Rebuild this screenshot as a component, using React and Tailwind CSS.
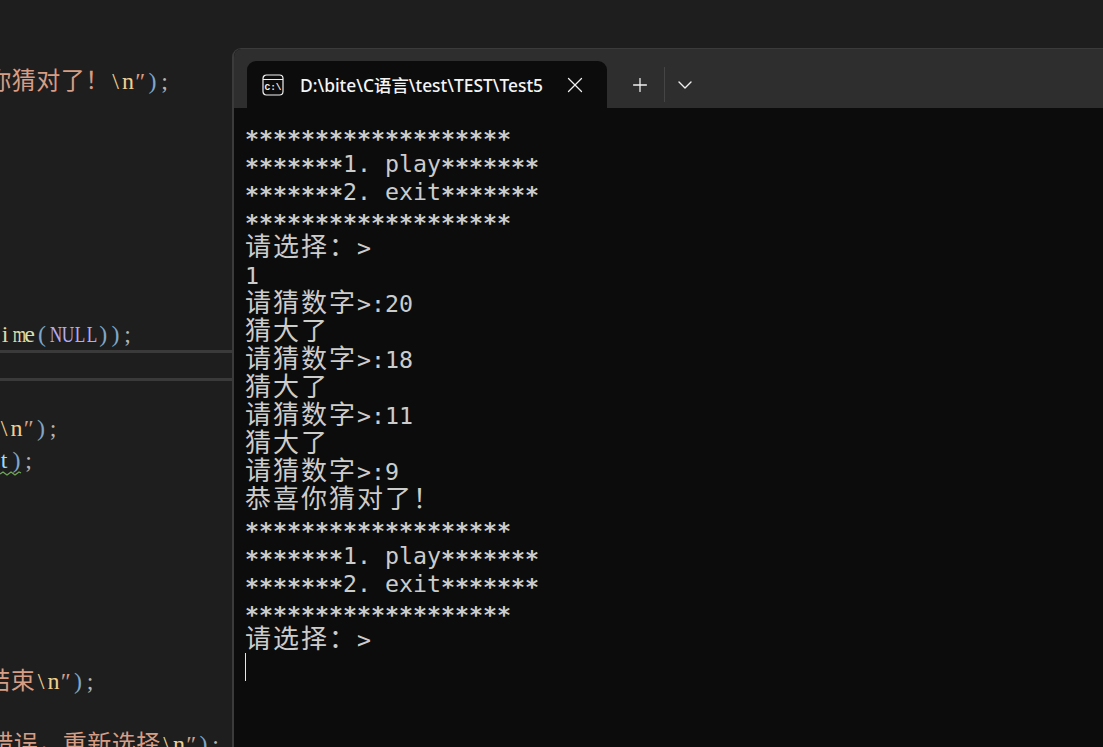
import { X, Plus, ChevronDown } from 'lucide-react';

const STR = 'text-[#d69d85]';
const ESC = 'text-[#f2cf8e]';
const PAREN = 'text-[#7fa6c9]';
const SEMI = 'text-[#b4b4b4]';

// x offset of each row is how far the text is cut by the left edge of the picture
const topRows = [
  { shift: 'ml-[-13px]', parts: [['你猜对了！', STR], ['\\n', ESC], ['″', STR], [')', PAREN], [';', SEMI]] },
  null, null, null, null, null, null, null,
  { shift: 'ml-[-1px]', parts: [['ime', 'text-[#dcdcaa]'], ['(', PAREN], ['NULL', 'text-[#b3aaf5]'], ['))', PAREN], [';', SEMI]] },
];

const bottomRows = [
  null,
  { shift: 'ml-[-2px]', parts: [['\\n', ESC], ['″', STR], [')', PAREN], [';', SEMI]] },
  { shift: 'ml-[-2px]', parts: [['t', 'text-[#9cdcfe]'], [')', PAREN], [';', SEMI]], squiggle: true },
  null, null, null, null, null, null,
  { shift: 'ml-[-14px]', parts: [['结束', STR], ['\\n', ESC], ['″', STR], [')', PAREN], [';', SEMI]] },
  null,
  { shift: 'ml-[-11px]', parts: [['错误，重新选择', STR], ['\\n', ESC], ['″', STR], [')', PAREN], [';', SEMI]] },
];

const termLines = [
  '*******************',
  '*******1. play*******',
  '*******2. exit*******',
  '*******************',
  '请选择：>',
  '1',
  '请猜数字>:20',
  '猜大了',
  '请猜数字>:18',
  '猜大了',
  '请猜数字>:11',
  '猜大了',
  '请猜数字>:9',
  '恭喜你猜对了！',
  '*******************',
  '*******1. play*******',
  '*******2. exit*******',
  '*******************',
  '请选择：>',
];

function CodeText({ text, color }) {
  return Array.from(text).map((ch, i) => {
    const wide = /[\u3000-\u9fff\uff00-\uffef]/.test(ch);
    // the editor font is a narrow fixed-width one, so squeeze the broad letters
    const squeeze = /[A-Zm]/.test(ch) ? 'scale-x-[0.72]' : '';
    return (
      <span
        key={i}
        className={`inline-block text-center ${color} ${squeeze} ${wide ? 'w-[24.5px]' : 'w-[12.25px]'}`}
      >
        {ch}
      </span>
    );
  });
}

function CodeRow({ row }) {
  return (
    <div className="relative h-[31.6px] leading-[31.6px] whitespace-nowrap text-[24px]">
      {row && (
        <div className={row.shift}>
          {row.parts.map(([text, color], i) => (
            <CodeText key={i} text={text} color={color} />
          ))}
        </div>
      )}
      {row && row.squiggle && (
        <svg className="absolute left-0 top-[26px]" width="22" height="6" viewBox="0 0 22 6" fill="none">
          <path d="M0 3 L3 1 L7 4 L11 1 L15 4 L19 1 L21 2" stroke="#6fa85a" strokeWidth="1.3" />
        </svg>
      )}
    </div>
  );
}

function TermLine({ text }) {
  const parts = text.split(/([^\x00-\x7f]+|\*+)/).filter(Boolean);
  return (
    <div className="h-[28px] leading-[28px] whitespace-pre text-[26px]">
      {parts.map((part, i) => {
        if (part.charCodeAt(0) > 127) {
          return <span key={i} className="tracking-[2px]">{part}</span>;
        }
        if (part[0] === '*') {
          return <span key={i} className="inline-block translate-y-[3px] text-[23.25px] font-bold">{part}</span>;
        }
        return <span key={i} className="text-[23.25px]">{part}</span>;
      })}
    </div>
  );
}

function ConsoleIcon() {
  return (
    <svg width="22" height="22" viewBox="0 0 22 22" fill="none" className="shrink-0">
      <rect x="1" y="1" width="20" height="20" rx="3.5" stroke="#f2f2f2" strokeWidth="1.2" />
      <path d="M1 5.5 H21" stroke="#f2f2f2" strokeWidth="1.2" />
      <text x="11" y="16" textAnchor="middle" fontSize="9.5" fontWeight="700" fill="#f2f2f2" fontFamily="'Liberation Mono', monospace">
        C:\
      </text>
    </svg>
  );
}

export default function App() {
  return (
    <div className="flex h-[747px] w-[1103px] overflow-hidden bg-[#1e1e1e]">
      <div className="w-[232px] shrink-0 overflow-hidden pt-[66px] font-['Liberation_Serif','Noto_Sans_CJK_SC',serif]">
        {topRows.map((row, i) => (
          <CodeRow key={i} row={row} />
        ))}
        <div className="h-[3px] bg-[#3a3a3a]" />
        <div className="h-[25px]" />
        <div className="h-[3px] bg-[#3a3a3a]" />
        {bottomRows.map((row, i) => (
          <CodeRow key={i} row={row} />
        ))}
      </div>

      <div className="mt-[48px] flex min-w-0 flex-1 flex-col overflow-hidden rounded-tl-[9px] border-l-2 border-t border-[#3b3b3b] bg-[#0c0c0c]">
        <div className="flex h-[59px] shrink-0 items-end bg-[#2e2e2e] pl-[13px]">
          <div className="flex h-[47px] w-[360px] items-center rounded-t-[9px] bg-[#0c0c0c] pl-[15px]">
            <ConsoleIcon />
            <span className="ml-[16px] mt-[2px] w-[244px] overflow-hidden whitespace-nowrap font-['Noto_Sans','Noto_Sans_CJK_SC',sans-serif] text-[17.4px] font-medium text-[#f5f5f5]">
              D:\bite\C语言\test\TEST\Test5
            </span>
            <X className="ml-[18px] shrink-0 text-[#f0f0f0]" size={26} strokeWidth={1.2} />
          </div>
          <div className="flex h-[47px] items-center">
            <Plus className="ml-[22px] shrink-0 text-[#f0f0f0]" size={22} strokeWidth={1.4} />
            <div className="ml-[13px] h-[35px] w-px bg-[#454545]" />
            <ChevronDown className="ml-[8px] shrink-0 text-[#f0f0f0]" size={24} strokeWidth={1.4} />
          </div>
        </div>
        <div className="pl-[11px] pt-[13px] font-['DejaVu_Sans_Mono','Noto_Sans_CJK_SC',monospace] text-[#cccccc]">
          {termLines.map((line, i) => (
            <TermLine key={i} text={line} />
          ))}
          <div className="h-[28px] w-px bg-[#e6e6e6]" />
        </div>
      </div>
    </div>
  );
}
